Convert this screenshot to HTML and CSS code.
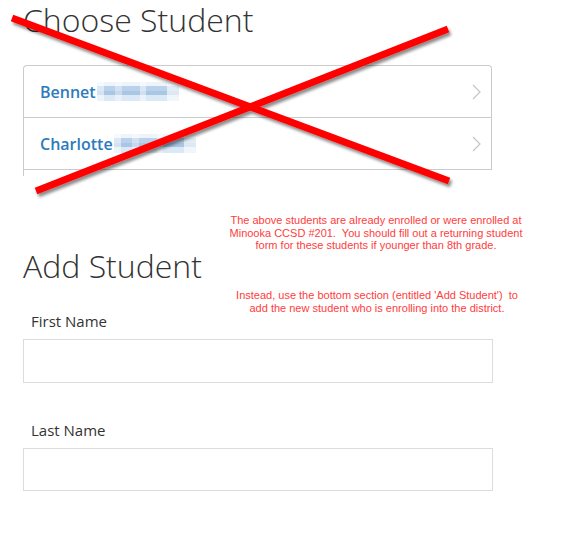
FILE: index.html
```html
<!DOCTYPE html>
<html>
<head>
<meta charset="utf-8">
<link rel="stylesheet" href="styles.css">
</head>
<body>
<main class="page">
  <h1 class="title">Choose Student</h1>
  <ul class="students">
    <li class="student">
      <span class="name">Bennet</span><span class="blur"></span>
      <svg class="chev" width="9" height="16" viewBox="0 0 9 16"><path d="M1 1 L8 8 L1 15" fill="none" stroke="#c4c4c4" stroke-width="1.2"/></svg>
    </li>
    <li class="student">
      <span class="name">Charlotte</span><span class="blur"></span>
      <svg class="chev" width="9" height="16" viewBox="0 0 9 16"><path d="M1 1 L8 8 L1 15" fill="none" stroke="#c4c4c4" stroke-width="1.2"/></svg>
    </li>
  </ul>
  <div class="stub"></div>
  <h1 class="title add">Add Student</h1>
  <div class="field first">
    <label class="label">First Name</label>
    <input class="input" type="text">
  </div>
  <div class="field last">
    <label class="label">Last Name</label>
    <input class="input input-last" type="text">
  </div>
</main>
<svg class="cross" width="577" height="543" viewBox="0 0 577 543">
  <defs>
    <filter id="sh" x="-10%" y="-10%" width="120%" height="130%">
      <feDropShadow dx="2" dy="3" stdDeviation="1.5" flood-color="#000" flood-opacity="0.45"/>
    </filter>
  </defs>
  <g filter="url(#sh)" stroke="#ff0000" stroke-width="7">
    <line x1="12" y1="18" x2="449" y2="181"/>
    <line x1="36" y1="191" x2="448" y2="29"/>
  </g>
</svg>
<p class="note note-1">The above students are already enrolled or were enrolled at
Minooka CCSD #201.  You should fill out a returning student
form for these students if younger than 8th grade.</p>
<p class="note note-2">Instead, use the bottom section (entitled 'Add Student')  to
add the new student who is enrolling into the district.</p>
</body>
</html>
```

FILE: styles.css
```css
html, body {
  margin: 0;
  padding: 0;
  background: #fff;
}
body {
  font-family: "Open Sans", "Liberation Sans", sans-serif;
  color: #333;
  width: 577px;
  height: 543px;
  overflow: hidden;
  position: relative;
}
.page {
  padding-left: 23px;
  width: 469px;
}
.title {
  margin: 0;
  font-size: 32px;
  font-weight: 300;
  line-height: 40px;
  color: #333;
}
.students {
  list-style: none;
  margin: 25px 0 0;
  padding: 0;
  border: 1px solid #cbcbcb;
  border-bottom: 0;
  border-radius: 4px 4px 0 0;
}
.student {
  height: 51px;
  border-bottom: 1px solid #cbcbcb;
  display: flex;
  align-items: center;
  padding: 0 10px 0 16px;
}
.name {
  font-size: 16px;
  font-weight: 600;
  color: #2d7bbd;
  line-height: 22px;
}
.blur {
  width: 82px;
  height: 19px;
  margin-left: 1px;
  background:
    linear-gradient(90deg, rgba(255,255,255,0.5) 0 8%, transparent 8% 22%, rgba(255,255,255,0.35) 22% 30%, transparent 30% 52%, rgba(255,255,255,0.45) 52% 60%, transparent 60% 85%, rgba(255,255,255,0.6) 85% 100%),
    linear-gradient(180deg, #eef4fa 0 20%, #b9d1ea 20% 45%, #a9c6e4 45% 70%, #dbe8f5 70% 100%);
}
.chev {
  margin-left: auto;
}
.stub {
  height: 6px;
  border-left: 1px solid #cbcbcb;
}
.add {
  margin-top: 70px;
}
.field {
  display: flex;
  flex-direction: column;
}
.field.first {
  margin-top: 25px;
}
.field.last {
  margin-top: 37px;
}
.label {
  font-size: 15px;
  line-height: 20px;
  padding-left: 8px;
  color: #333;
  margin-bottom: 8px;
}
.input {
  box-sizing: border-box;
  width: 470px;
  height: 44px;
  margin: 0;
  border: 1px solid #dcdcdc;
  border-radius: 0;
  background: #fff;
  outline: none;
}
.input-last {
  height: 43px;
}
.cross {
  position: absolute;
  left: 0;
  top: 0;
  pointer-events: none;
}
.note {
  position: absolute;
  margin: 0;
  width: 340px;
  left: 206px;
  text-align: center;
  white-space: pre;
  font-family: "Liberation Sans", Arial, sans-serif;
  font-size: 11px;
  line-height: 12.5px;
  color: #ff3c3c;
}
.note-1 {
  top: 214px;
}
.note-2 {
  top: 289px;
  left: 207px;
}
```
